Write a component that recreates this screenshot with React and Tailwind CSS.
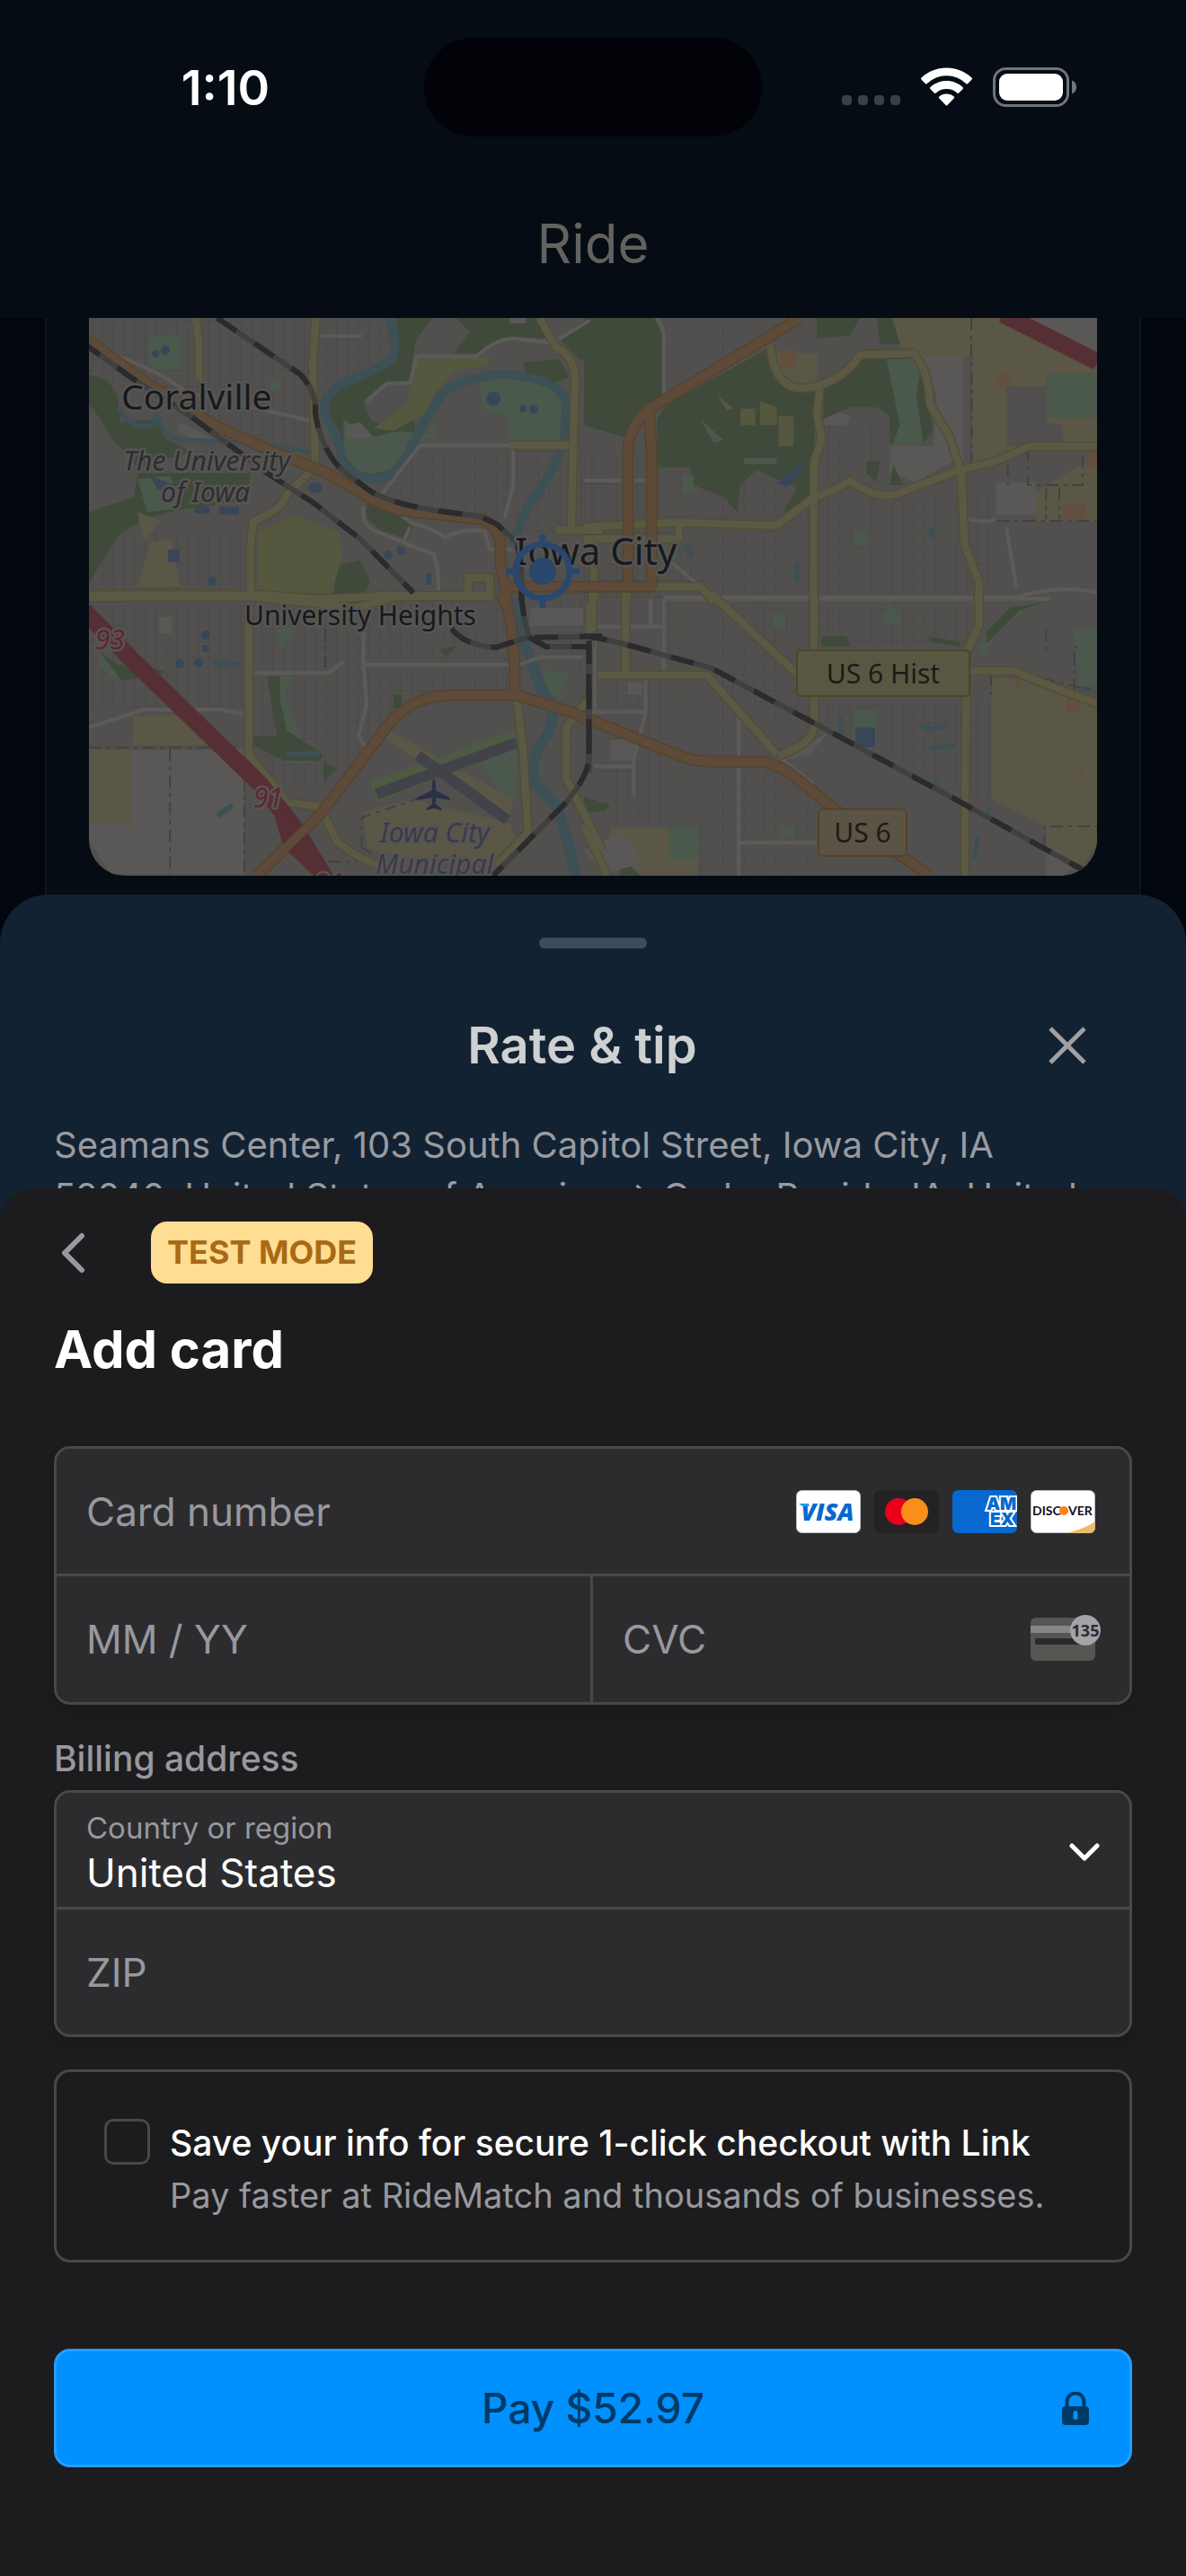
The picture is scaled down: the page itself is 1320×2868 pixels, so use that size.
import React from "react";

const NW = "translate(-9 -14) scale(0.37 0.3333)";
const NE = "translate(551 -14) scale(0.37 0.3333)";
const SW = "translate(-9 306) scale(0.37 0.3333)";
const SE = "translate(551 306) scale(0.37 0.3333)";

const FOREST = "#3f4a3a";
const PARK = "#4a594c";
const GOLF = "#55583f";
const FARM = "#5a5747";
const PALE = "#5a5856";
const WATER = "#3c5055";
const STREETS = "url(#streets)";

const areas = [
  [NW, STREETS, "M24 42H700V480L560 460 300 330 24 240ZM720 42H930V160L720 280ZM1290 470H1568V760H1290ZM1010 480H1290V720L900 650ZM24 760H500V950H24Z"],
  [NE, STREETS, "M0 500H680V980H0ZM700 640H1220V980H700ZM720 400H930V600H720ZM300 42H460V200H300Z"],
  [SW, STREETS, "M24 40H490V380H24ZM520 100H850V640H520ZM860 20H1290V330H1040L860 500ZM1420 20H1568V300H1420Z"],
  [SE, STREETS, "M240 30H680V520L370 240H240ZM700 40H1170V180H700ZM720 360H1130V660L700 430ZM40 280H460V780H40ZM240 600H700V945H240ZM1160 360H1225V690H1160Z"],
  [NW, FOREST, "M950 42H1060L1010 110 1000 165 990 250 900 270 850 320 870 380 920 410 1000 380 1010 430 960 500 920 570 860 570 800 520 770 420 740 340 760 280 900 200 945 160Z"],
  [NW, FOREST, "M1130 42H1370L1400 110 1290 105 1200 160 1120 160 1170 90ZM1440 110L1500 60 1568 42V190L1500 180Z"],
  [NW, FOREST, "M24 230L80 250 110 300 120 390 230 380 250 440 330 490 170 540 90 440 60 380 24 330Z"],
  [NW, FOREST, "M170 560H510L500 650 310 680 200 710 120 760 60 860 24 930V690L160 640ZM860 660L940 690 1000 740 980 780 900 750 860 710ZM770 870L840 850 870 920 850 980H760ZM1330 190L1440 180 1470 240 1420 260 1340 230Z"],
  [NW, PARK, "M205 100H300V215H235L205 190ZM1200 250L1300 235 1430 260 1460 300V450H1290V370L1210 350ZM790 380L870 440 960 420 1040 430 1070 380V440L1000 450 930 550 850 570 790 500ZM170 580L270 570 290 680 200 690ZM570 250H600V285H570Z"],
  [NW, GOLF, "M1010 180L1230 170 1225 200 1120 220 1060 300 1050 350 940 420 880 410 980 330ZM530 760L640 700 780 760 785 850 750 960H530Z"],
  [NW, FARM, "M170 690L240 720 190 790ZM210 790L270 780 300 940H170Z"],
  [NW, PALE, "M800 400L840 390 880 440 800 445ZM1290 42H1340V60H1290ZM300 390L390 440 370 460 290 420Z"],
  [NE, PALE, "M1480 42H1544V170L1320 42ZM930 42H1140V540L1050 480 1060 300 1030 200 980 130 950 100ZM1240 590H1360V700H1240ZM720 340L800 370 790 400 720 400ZM920 470H1060L1110 520 1000 590 920 560Z"],
  [NE, FARM, "M930 42H1240L1544 215V460H1330L1170 540V170H960ZM1360 620L1544 500V720H1360ZM560 160H700V260H600Z"],
  [NE, FOREST, "M0 42H210L240 110V330L170 350 120 440 0 400ZM250 330L560 140 580 240 640 290 700 290 690 500 690 660 600 690 640 610 520 550 470 600 460 690 420 640 330 600 320 540H220V380ZM700 42H830L800 100 700 110ZM720 260L840 170 960 170 1020 210 1050 420 1020 460H920V370L880 340 800 340 720 380ZM880 42H925L950 130H890ZM850 520H890L880 590 850 560ZM930 530L960 600H920Z"],
  [NE, PARK, "M480 510H580V530H480ZM910 180H1010V230L1000 300 1020 460H930L950 400ZM1390 225H1544V375H1390ZM810 755H850V800H810ZM300 570H330V625H300ZM350 380L420 450 390 460Z"],
  [NE, "#55583f", "M470 345H515V400H470ZM530 320L580 340V400H530ZM585 370H630V470H585ZM400 300L450 345 430 350Z"],
  [NE, "#504f4d", "M1270 270H1390V390L1440 400V470H1320L1270 470Z"],
  [NE, "#634f3e", "M590 150H637V210H590ZM1240 230H1275L1285 275H1240ZM1510 490H1544V540H1510ZM1440 665H1510V710H1440Z"],
  [SW, PARK, "M590 120H650L600 195ZM560 280H645L610 340 630 400 680 520 700 570H610V400ZM50 200L150 280 100 290 60 250ZM1390 260H1470L1440 340 1400 350ZM1170 500L1310 460V700H1280Z"],
  [SW, FOREST, "M560 280H600V370L620 460 730 540 720 560H610L520 510 500 480H590ZM730 560L770 590 730 630ZM940 340H965V385H940ZM60 200L110 240 250 260 230 285 120 290ZM1080 190L1130 175 1100 215Z"],
  [SW, FARM, "M160 410H310L400 510H155ZM24 525H155V770H24ZM850 730L1000 690 1290 770 1320 850 1230 900 960 880 860 850ZM930 460L1300 690 1290 760 1060 600 920 490Z"],
  [SW, PALE, "M155 525H490V940H90L24 830V770H155ZM235 80H275V135H235ZM1350 50H1510V110H1350Z"],
  [SW, "#4e5a42", "M870 630L1310 460V520L890 700Z"],
  [SE, PARK, "M810 390H880V520H810ZM255 780H345V890H255ZM590 780H632V820H590ZM570 70H605V115H570ZM890 100L920 30 960 110ZM1180 180L1280 50 1400 30 1330 60 1240 130 1200 220ZM1470 120H1544V300L1490 320Z"],
  [SE, FOREST, "M715 145H790L800 180H715ZM1210 130L1280 50 1390 30 1310 60 1210 170ZM1030 145L1130 165V180L1050 165ZM0 680L80 710 60 730 0 735ZM110 910L150 900 180 945H110Z"],
  [SE, FARM, "M1225 285L1380 290 1544 390V840L1500 910 1390 850V780L1225 690ZM80 785H255V890H345L340 945H170L80 850Z"],
  [SE, PALE, "M1390 850L1480 910 1440 945H1390ZM80 490H155V560H80ZM130 300H175V340H130ZM0 860L110 800 180 900 60 940ZM630 540L740 460 680 540 600 560Z"],
  [SE, "#634f3e", "M1290 290L1320 280 1310 320ZM1450 345H1490V400H1450ZM1485 575L1510 600 1500 625Z"],
];

const water = [
  [NW, 10, "M925 42Q960 120 935 180 880 220 790 260 720 300 735 370 780 440 785 510 810 580 900 580 960 560 1000 460 1060 330 1100 280 1200 225 1290 230 1450 250 1460 330L1455 450M1440 490Q1400 600 1350 660 1310 760 1300 800"],
  [NW, 5, "M110 340Q150 420 220 400L230 360Q240 440 300 450 400 450 580 470L690 490"],
  [SW, 12, "M1300 20L1330 160 1390 330Q1440 400 1400 480 1340 560 1370 640L1430 710Q1460 800 1490 945"],
  [SW, 6, "M620 538H720M400 235L480 240M410 745L455 710"],
  [SE, 5, "M770 410L775 470M1010 440Q1050 470 1090 440M1040 520L1115 510M1062 620V660M1185 810L1175 890M1225 715L1210 745M1490 320H1530"],
  [NE, 6, "M640 860V920M1045 745V775M300 800L325 840"],
];

const minor = [
  [NW, "M90 160Q220 210 320 290L690 385M720 102H845M905 630L1020 467H1300V600L1275 710M860 320L920 260H990L1010 170H1190Q1250 110 1300 110L1420 125 1530 50M850 670Q840 740 900 760L1010 810 1060 830Q1080 880 1075 960M950 690L1000 730Q1050 740 1095 775 1160 740 1215 755L1230 815H1300M990 740L970 790"],
  [NE, "M220 42Q245 80 240 130V320M0 585H190M240 975H1300Q1430 930 1544 960M265 860L350 940M1150 710Q1200 730 1240 715M1270 740L1300 940"],
  [SW, "M24 450L190 390H420L495 405M520 268H745L790 230M850 130V240H1290M850 240L860 370 835 480 860 520M1320 240L1380 215H1510"],
  [SE, "M240 20H1400M240 20V260M0 113H240M0 398H185M185 290V398L150 560V680M30 580H150M465 400V945M465 835H700M690 640L590 550M200 20V113M32 160V390"],
];

const yellow = [
  [NW, "M345 42L355 120V250M707 42L697 200 705 540 620 630Q610 680 520 720L510 800V960M24 967H560Q700 990 900 970H1230V910H1165V967M1380 42L1430 140Q1500 180 1485 290L1475 760M1290 467H1470M1430 750H1568"],
  [NE, "M560 130Q570 270 650 277 770 270 830 165L990 160Q1040 220 1040 330L1100 440 1135 560 1145 800 1190 930 1185 990M710 280L700 360 715 450 692 520 690 990M1544 470H1340L1240 520 1130 550 940 630Q880 650 800 585 760 620 692 640L580 735 270 725 0 740M285 720V780H30V980M0 780H280M210 940H350L390 990M130 940V990"],
  [SW, "M24 15L520 13 830 50 950 12H1240M505 40V540L620 700 720 715 770 830Q850 900 900 910M1310 340L1330 520 1345 800 1250 910M1530 40V180M1530 350L1460 450V620L1568 860"],
  [SE, "M380 0L640 270M692 0V430Q700 500 585 545M1188 0V110L1150 200 1145 945M125 0V270M40 275H370L580 540M1160 260H1290L1400 310 1544 370M0 780L70 945M25 0V130"],
];

const orange = [
  [NW, "M24 118L200 260 400 400 560 480 740 560 880 650 960 685 1210 715Q1260 740 1262 800V860L1285 1000M1260 940H1568"],
  [NE, "M650 42L190 350Q130 420 133 480V940M195 350L203 480V940M0 940H215"],
  [SW, "M1262 0Q1310 80 1305 340M530 945L720 740 940 420Q1010 345 1110 342H1310L1480 400 1568 440"],
  [SE, "M0 420L30 430 290 545Q330 565 400 565H540Q600 580 640 620L750 720 1040 945"],
];

const red = [
  [NE, 19, "M1260 30L1544 188"],
  [SW, 19, "M10 60L160 230 540 640 640 780 740 960"],
];

const rail = [
  [NW, "M0 120L150 240 330 370 560 560 700 660 840 780 1000 960M410 42L480 95 660 230Q710 290 705 360 720 470 780 545L870 620Q950 670 1100 690L1200 705 1250 730 1310 790Q1330 860 1325 990"],
  [SW, "M1325 0Q1330 90 1350 150L1400 180 1528 180V560Q1520 620 1460 700L1240 945M1115 120Q1160 180 1250 182L1340 150 1568 145"],
  [SE, "M0 145Q60 150 230 205L380 250 700 440 1150 710 1500 925M15 160V600"],
];

const borders = [
  [NE, "M1165 42V540M1170 545L1250 520M1335 480V600H1500V480M1390 610V715M1430 610V715M1275 530V600M1240 720H1544"],
  [SW, "M24 517H470M268 520V945M492 620V945M735 120V250M845 850V750L1010 690M845 850L880 875M745 898H860"],
  [SE, "M1155 360V700M1385 850V780H1544M1225 270V340M1390 120V210M1475 330V180L1500 190M1300 265L1544 330"],
];

function Lines({ items, stroke, width, ...rest }) {
  return items.map(([t, d], i) => (
    <path key={i} transform={t} d={d} fill="none" stroke={stroke} strokeWidth={width} strokeLinejoin="round" vectorEffect="non-scaling-stroke" {...rest} />
  ));
}

function MapLabel({ x, y, size, fill = "#17191d", children, ...rest }) {
  return (
    <text x={x} y={y} fontSize={size} fill={fill} stroke="#565552" strokeWidth="5" strokeLinejoin="round" paintOrder="stroke" {...rest}>
      {children}
    </text>
  );
}

function CityMap() {
  return (
    <svg viewBox="0 0 1122 621" className="block h-auto w-full rounded-b-[40px] bg-[#51504e] font-['Noto_Sans',sans-serif]" role="img" aria-label="Map of Iowa City">
      <defs>
        <pattern id="streets" width="64" height="54" patternUnits="userSpaceOnUse">
          <path d="M0 1H64M1 0V54M33 0V54" fill="none" stroke="#4a4947" strokeWidth="3" />
        </pattern>
      </defs>
      {areas.map(([t, fill, d], i) => <path key={i} transform={t} fill={fill} d={d} />)}
      {water.map(([t, w, d], i) => (
        <path key={i} transform={t} d={d} fill="none" stroke={WATER} strokeWidth={w} vectorEffect="non-scaling-stroke" />
      ))}
      <g fill="#384658">
        <circle cx="85" cy="36" r="5" /><circle cx="74" cy="40" r="4" /><rect x="88" y="258" width="13" height="14" /><rect x="118" y="210" width="16" height="8" />
        <rect x="145" y="210" width="22" height="9" /><path d="M68 176L95 186 85 194 76 190Z" /><ellipse cx="252" cy="189" rx="8" ry="6" /><circle cx="137" cy="293" r="5" />
        <circle cx="130" cy="353" r="5" /><circle cx="130" cy="368" r="4" /><circle cx="101" cy="385" r="5" /><circle cx="122" cy="384" r="5" /><circle cx="333" cy="264" r="5" />
        <circle cx="347" cy="259" r="5" /><rect x="375" y="284" width="6" height="13" /><circle cx="483" cy="101" r="4" /><circle cx="495" cy="102" r="5" /><circle cx="450" cy="90" r="8" />
        <path d="M766 184L792 163 796 168 776 188Z" /><rect x="853" y="456" width="22" height="22" />
      </g>
      <g fill="none" stroke="#42434a" strokeWidth="12">
        <path d="M320 530L476 473M366 487L466 559" />
      </g>
      <Lines items={borders} stroke="#434243" width="2" strokeDasharray="14 6 4 6" />
      <Lines items={minor} stroke="#5c5b59" width="4" />
      <Lines items={yellow} stroke="#504d38" width="11" />
      <Lines items={yellow} stroke="#5b5944" width="8" />
      <Lines items={orange} stroke="#56432c" width="13" />
      <Lines items={orange} stroke="#5d4a38" width="10" />
      {red.map(([t, w, d], i) => <path key={i} transform={t} d={d} fill="none" stroke="#562f34" strokeWidth={w} vectorEffect="non-scaling-stroke" />)}
      <path transform={SW} fill="#562f34" d="M575 720L670 780 700 840 740 945H700L610 850Z" />
      <path transform={SW} fill="none" stroke="#5d4a38" strokeWidth="10" vectorEffect="non-scaling-stroke" d="M530 945L720 740" />
      <Lines items={rail} stroke="#404040" width="6" />
      <Lines items={rail} stroke="#2b2b2d" width="6" strokeDasharray="26 24" />

      <path transform={SW} fill="#2b3048" d="M1062 620Q1068 625 1068 660L1110 685V693L1068 684 1067 705 1085 720V727L1062 720 1040 727V720L1057 705 1056 684 1010 693V685L1056 660Q1056 625 1062 620Z" />
      <MapLabel x="36" y="102" size="39">Coralville</MapLabel>
      <MapLabel x="38" y="170" size="30" fontStyle="italic" fill="#2e2c31">The University</MapLabel>
      <MapLabel x="80" y="205" size="30" fontStyle="italic" fill="#2e2c31">of Iowa</MapLabel>
      <MapLabel x="474" y="275" size="42">Iowa City</MapLabel>
      <MapLabel x="173" y="342" size="30">University Heights</MapLabel>
      <MapLabel x="7" y="369" size="30" fontStyle="italic" fill="#632431">93</MapLabel>
      <MapLabel x="183" y="545" size="30" fontStyle="italic" fill="#632431">91</MapLabel>
      <MapLabel x="251" y="640" size="30" fontStyle="italic" fill="#632431">91</MapLabel>
      <MapLabel x="324" y="584" size="30" fontStyle="italic" fill="#3a3a49">Iowa City</MapLabel>
      <MapLabel x="319" y="619" size="30" fontStyle="italic" fill="#3a3a49">Municipal</MapLabel>
      <g strokeWidth="2">
        <rect x="788" y="370" width="192" height="51" rx="4" fill="#595742" stroke="#4a4629" />
        <rect x="812" y="547" width="98" height="52" rx="5" fill="#5b5344" stroke="#56412a" />
      </g>
      <g fontSize="30" fill="#1b1b1a">
        <text x="884" y="407" textAnchor="middle">US 6 Hist</text>
        <text x="861" y="584" textAnchor="middle">US 6</text>
      </g>
      <g stroke="#2a476e" strokeWidth="7" fill="none">
        <circle cx="505" cy="282" r="30" />
        <path d="M505 241V252M505 312V323M464 282H475M535 282H546" />
      </g>
      <circle cx="505" cy="282" r="15" fill="#2a476e" />
    </svg>
  );
}

function StatusBar() {
  return (
    <div className="grid grid-cols-[1fr_auto_1fr] pt-[42px]">
      <time className="pt-6 pl-[30px] text-center text-[54px] leading-[64px] font-semibold text-white">1:10</time>
      <div className="h-[110px] w-[376px] rounded-full bg-[#010308]" />
      <div className="flex items-start gap-[23px] pt-[33px] pl-[89px]">
        <svg width="65" height="44" viewBox="0 0 65 44" fill="#3b4046" aria-hidden="true">
          <rect x="0" y="31" width="11" height="11" rx="4" /><rect x="18" y="31" width="11" height="11" rx="4" />
          <rect x="36" y="31" width="11" height="11" rx="4" /><rect x="54" y="31" width="11" height="11" rx="4" />
        </svg>
        <svg width="57" height="44" viewBox="0 0 57 44" fill="#fff" aria-hidden="true">
          <path d="M28.500 0.500C17.600 .5 7.700 4.700 .6 11.500a1.500 1.500 0 0 0 0 2.200l4.200 4.200a1.500 1.500 0 0 0 2.100 0A31 31 0 0 1 50.100 17.900a1.500 1.500 0 0 0 2.100 0l4.200-4.200a1.500 1.500 0 0 0 0-2.200C49.300 4.700 39.400 .5 28.500 .5Z" />
          <path d="M28.500 15C21.500 15 15.200 17.700 10.500 22a1.500 1.500 0 0 0 0 2.200l4.300 4.300a1.500 1.500 0 0 0 2 0 17.500 17.500 0 0 1 23.400 0 1.500 1.500 0 0 0 2 0l4.300-4.300a1.500 1.500 0 0 0 0-2.200C41.800 17.700 35.500 15 28.500 15Z" />
          <path d="M28.500 29.500c-3.200 0-6.100 1.200-8.200 3.100a1.300 1.300 0 0 0 0 2l7.200 7.400a1.400 1.400 0 0 0 2 0l7.200-7.400a1.300 1.300 0 0 0 0-2c-2.100-1.900-5-3.100-8.200-3.100Z" />
        </svg>
        <svg width="94" height="44" viewBox="0 0 94 44" aria-hidden="true">
          <rect x="1.500" y="1.500" width="82" height="41" rx="13" fill="none" stroke="#717479" strokeWidth="3" />
          <rect x="7" y="7" width="71" height="30" rx="9" fill="#fff" />
          <path d="M88 14.500c3 1 5 4 5 7.500s-2 6.500-5 7.500Z" fill="#717479" />
        </svg>
      </div>
    </div>
  );
}

function CardBrands() {
  return (
    <div className="flex shrink-0 gap-[15px]">
      <svg width="72" height="48" viewBox="0 0 72 48" role="img" aria-label="Visa">
        <rect x=".5" y=".5" width="71" height="47" rx="6" fill="#fff" stroke="#bdbdbf" />
        <text x="35" y="34" textAnchor="middle" fontFamily="Open Sans, sans-serif" fontStyle="italic" fontWeight="800" fontSize="27" fill="#0768cf">VISA</text>
        <path d="M3 15h11l1 3H7Z" fill="#19a0f5" />
      </svg>
      <svg width="72" height="48" viewBox="0 0 72 48" role="img" aria-label="Mastercard">
        <rect width="72" height="48" rx="6" fill="#232324" />
        <circle cx="27" cy="24" r="15" fill="#eb001b" />
        <circle cx="45" cy="24" r="15" fill="#f98e1b" />
      </svg>
      <svg width="72" height="48" viewBox="0 0 72 48" className="rounded-md" role="img" aria-label="American Express">
        <rect width="72" height="48" rx="6" fill="#0768cf" />
        <g fontFamily="Inter, sans-serif" fontWeight="900" fontSize="19" fill="#0768cf" stroke="#fff" strokeWidth="4" paintOrder="stroke">
          <text x="38" y="22">AM</text>
          <text x="42" y="39">EX</text>
        </g>
      </svg>
      <svg width="72" height="48" viewBox="0 0 72 48" role="img" aria-label="Discover">
        <rect x=".5" y=".5" width="71" height="47" rx="6" fill="#fff" stroke="#bdbdbf" />
        <path d="M39 48Q58 44 72 35v7a6 6 0 0 1-6 6Z" fill="#e9bb6c" />
        <g fontFamily="Lato, sans-serif" fontWeight="700" fontSize="14" fill="#111218">
          <text x="2" y="28">DISC</text>
          <text x="42" y="28">VER</text>
        </g>
        <circle cx="37" cy="23" r="5" fill="#f98414" />
      </svg>
    </div>
  );
}

function CvcIcon() {
  return (
    <svg width="78" height="54" viewBox="0 0 78 54" className="-mr-[6px] shrink-0" aria-hidden="true">
      <rect y="3" width="72" height="48" rx="6" fill="#575653" />
      <rect y="12" width="72" height="8" fill="#86868b" />
      <rect x="5" y="26" width="62" height="7" rx="2" fill="#2a2a2c" />
      <circle cx="61" cy="17" r="17" fill="#a3a3a8" />
      <text x="61" y="24" textAnchor="middle" fontFamily="Noto Sans, sans-serif" fontWeight="700" fontSize="18" fill="#2c2c2e">135</text>
    </svg>
  );
}

const field = "min-w-0 flex-1 bg-transparent text-[44px] leading-[56px] text-white outline-none placeholder:text-[#98989e]";
const group = "overflow-hidden rounded-[18px] border-[3px] border-[#48484a] bg-[#2c2c2e] shadow-[0_6px_12px_rgba(0,0,0,0.12)]";

export default function App() {
  return (
    <main className="flex min-h-screen flex-col bg-[#02070d] font-['Inter',sans-serif]">
      <header className="h-[354px] bg-[#050c13]">
        <StatusBar />
        <h1 className="pt-[79px] text-center text-[60px] leading-[80px] font-normal text-[#62625f]">Ride</h1>
      </header>

      <section className="mx-[50px] border-x-2 border-[#0d141b] bg-[#050c13] px-[47px] pb-[75px]">
        <CityMap />
      </section>

      <section className="-mt-[54px] flex flex-col rounded-t-[54px] bg-[#122233] px-[60px] pt-12 pb-[54px]">
        <div className="h-3 w-[120px] self-center rounded-full bg-[#3e4b59]" />
        <div className="flex items-center pt-[72px]">
          <h2 className="flex-1 pl-[120px] text-center text-[56px] leading-[72px] font-semibold text-[#cfd0d1]">Rate &amp; tip</h2>
          <button type="button" aria-label="Close" className="flex h-[72px] w-36 items-center justify-center">
            <svg width="42" height="42" viewBox="0 0 42 42" fill="none" stroke="#a09fa2" strokeWidth="5" aria-hidden="true">
              <path d="M2 2L40 40M40 2L2 40" />
            </svg>
          </button>
        </div>
        <p className="mt-[46px] text-[40px] leading-[57px] text-[#9a9ba0]">
          Seamans Center, 103 South Capitol Street, Iowa City, IA<br />
          52240, United States of America → Cedar Rapids, IA, United
        </p>
      </section>

      <form className="-mt-[91px] flex flex-1 flex-col rounded-t-[36px] bg-[#1c1c1e] px-[60px] pt-[37px] pb-24" onSubmit={(e) => e.preventDefault()}>
        <div className="flex items-center">
          <button type="button" aria-label="Back" className="flex h-[69px] w-[108px] items-center pl-2">
            <svg width="28" height="46" viewBox="0 0 28 46" fill="none" stroke="#98989f" strokeWidth="6" strokeLinecap="round" strokeLinejoin="round" aria-hidden="true">
              <path d="M23 4L4 23L23 42" />
            </svg>
          </button>
          <span className="rounded-[18px] bg-[#ffdd93] px-[18px] text-[36px] leading-[69px] font-bold text-[#a86a14]">TEST MODE</span>
        </div>
        <h2 className="pt-[37px] text-[58px] leading-[72px] font-bold text-white">Add card</h2>

        <div className={"mt-[72px] " + group}>
          <div className="flex h-[142px] items-center border-b-[3px] border-[#48484a] pr-[38px] pl-[33px]">
            <input aria-label="Card number" placeholder="Card number" className={field} />
            <CardBrands />
          </div>
          <div className="grid h-[140px] grid-cols-2">
            <div className="flex min-w-0 items-center border-r-[3px] border-[#48484a] px-[33px]">
              <input aria-label="Expiration date" placeholder="MM / YY" className={field} />
            </div>
            <div className="flex min-w-0 items-center pr-[38px] pl-[33px]">
              <input aria-label="CVC" placeholder="CVC" className={field} />
              <CvcIcon />
            </div>
          </div>
        </div>

        <h3 className="mt-9 mb-[11px] text-[39px] leading-[48px] font-medium text-[#98989e]">Billing address</h3>
        <div className={group}>
          <div className="relative border-b-[3px] border-[#48484a] px-[33px] pt-[18px] pb-[9px]">
            <label htmlFor="country" className="block text-[33px] leading-[42px] text-[#98989e]">Country or region</label>
            <select id="country" defaultValue="us" className="block w-full appearance-none bg-transparent text-[44px] leading-[58px] text-white outline-none">
              <option value="us">United States</option>
            </select>
            <svg width="34" height="20" viewBox="0 0 34 20" fill="none" stroke="#fff" strokeWidth="5" strokeLinecap="round" strokeLinejoin="round" className="pointer-events-none absolute right-[33px] bottom-[51px]" aria-hidden="true">
              <path d="M3 3L17 17L31 3" />
            </svg>
          </div>
          <div className="flex h-[139px] items-center px-[33px]">
            <input aria-label="ZIP" placeholder="ZIP" className={field} />
          </div>
        </div>

        <div className="mt-9 flex gap-[22px] rounded-[18px] border-[3px] border-[#48484a] px-[53px] pt-[50px] pb-[43px]">
          <input id="save" type="checkbox" className="mt-0.5 size-[51px] shrink-0 appearance-none rounded-[10px] border-[3px] border-[#48484a]" />
          <label htmlFor="save" className="min-w-0 text-[38px] leading-[58px] text-[#98989e]">
            <span className="block text-[39px] font-medium text-white">Save your info for secure 1-click checkout with Link</span>
            <span className="block">Pay faster at RideMatch and thousands of businesses.</span>
          </label>
        </div>

        <button type="submit" className="mt-24 grid h-[132px] grid-cols-[1fr_auto_1fr] items-center rounded-[18px] border-[3px] border-[#269dff] bg-[#0091ff] px-[45px] text-[46px] font-medium text-[#003a66]">
          <span className="col-start-2">Pay $52.97</span>
          <svg width="30" height="37" viewBox="0 0 30 37" className="justify-self-end" aria-hidden="true">
            <path d="M5.500 17V11a9.500 9.500 0 0 1 19 0v6" fill="none" stroke="#003a66" strokeWidth="4" />
            <path fillRule="evenodd" fill="#003a66" d="M4 16h22a4 4 0 0 1 4 4v13a4 4 0 0 1-4 4H4a4 4 0 0 1-4-4V20a4 4 0 0 1 4-4ZM15 21a2.500 2.500 0 0 0-2.500 2.500v5a2.500 2.500 0 0 0 5 0v-5A2.500 2.500 0 0 0 15 21Z" />
          </svg>
        </button>
      </form>
    </main>
  );
}
